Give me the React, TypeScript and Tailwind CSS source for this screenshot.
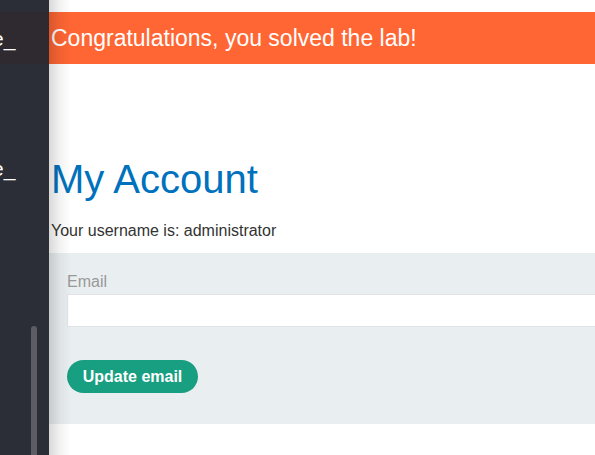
import React from "react";

export default function App() {
  return (
    <div
      className="flex w-[595px] h-[455px] overflow-hidden bg-white"
      style={{ fontFamily: '"Liberation Sans", Arial, sans-serif' }}
    >
      {/* sidebar */}
      <div className="w-[49px] shrink-0 bg-[#2b2e37] flex flex-col">
        <div className="mt-[12px] h-[52px] bg-[#2e2a30] flex items-center overflow-hidden">
          <span className="ml-[-8px] text-[21px] leading-none text-white whitespace-nowrap">e_</span>
        </div>
        <div className="mt-[84px] h-[40px] flex items-center overflow-hidden">
          <span className="ml-[-8px] text-[21px] leading-none text-white whitespace-nowrap">e_</span>
        </div>
        <div className="flex-1 flex flex-col items-end pr-[12px]">
          <div className="mt-[138px] flex-1 w-[6px] rounded-t-full bg-[#5b5d62]" />
        </div>
      </div>

      {/* main */}
      <div className="relative flex-1 min-w-0 flex flex-col">
        <div className="pointer-events-none absolute left-0 top-0 bottom-0 w-[22px] bg-gradient-to-r from-black/15 via-black/5 to-transparent z-10" />
        <div className="mt-[12px] h-[52px] bg-[#ff6633] flex items-center pl-[2px]">
          <span className="text-[23px] leading-none text-white whitespace-nowrap">Congratulations, you solved the lab!</span>
        </div>
        <h1 className="mt-[92px] pl-[2px] text-[40px] leading-[46px] text-[#0071bc] whitespace-nowrap">My Account</h1>
        <p className="mt-[20px] pl-[2px] text-[16px] leading-[18px] text-[#333332] whitespace-nowrap">
          Your username is: administrator
        </p>
        <div className="mt-[13px] bg-[#e9eef0] pl-[18px] pt-[20px] pb-[31px] h-[171px]">
          <div className="text-[16px] leading-[18px] text-[#999999]">Email</div>
          <div className="mt-[3px] h-[33px] w-[600px] bg-white border border-[#e1e4e6]" />
          <button className="mt-[33px] h-[33px] w-[131px] rounded-full bg-[#189e80] text-white font-bold text-[16px] leading-none">
            Update email
          </button>
        </div>
      </div>
    </div>
  );
}
